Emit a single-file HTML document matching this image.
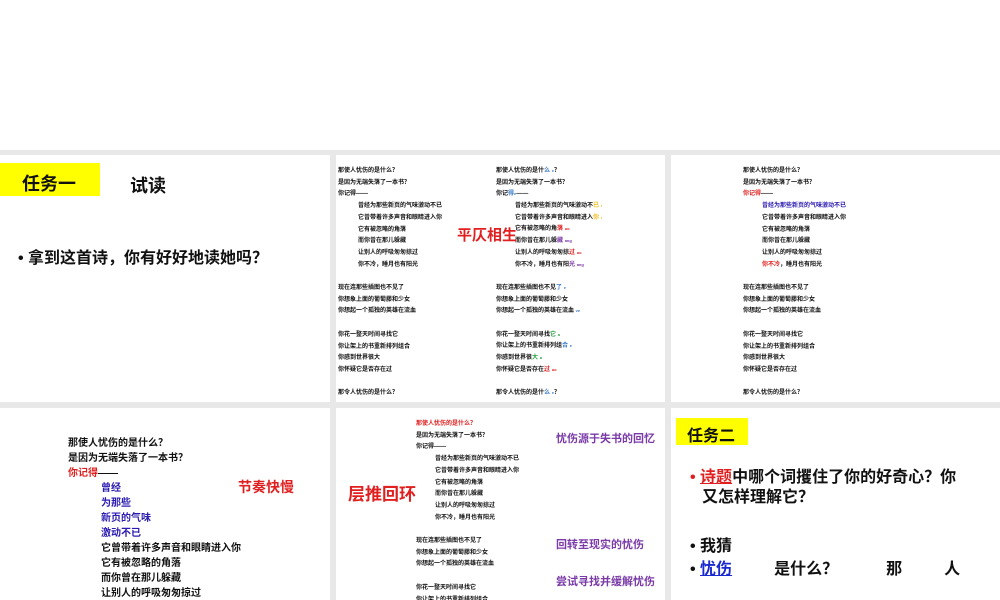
<!DOCTYPE html>
<html><head><meta charset="utf-8"><style>
*{margin:0;padding:0}
body{width:1000px;height:600px;background:#fff;position:relative;overflow:hidden;font-family:"Liberation Sans","Noto Sans CJK SC",sans-serif;font-weight:bold;color:#111}
.g{position:absolute;left:0;top:150px;width:1000px;height:450px;background:#e8e8e8}
.p{position:absolute;background:#fff;overflow:hidden}
.a{position:absolute;white-space:nowrap}
.s{font-size:6px;line-height:11.7px}
.s div{height:11.7px;line-height:11.7px;overflow:visible}
.r{color:#e02020}.b{color:#2a1ab0}.pu{color:#7a35a8}.y{color:#f0c020}.lb{color:#3a7ac8}.gr{color:#2aa040}.pv{color:#7a3aa8}
.ss{font-size:4px;line-height:0;vertical-align:baseline}
</style></head><body>
<div class="g"></div>
<div class="p" style="left:0;top:155px;width:330px;height:247px">
 <div class="a" style="left:0;top:8px;width:100px;height:33px;background:#ffff00"></div>
 <div class="a" style="left:22px;top:15px;font-size:18px">任务一</div>
 <div class="a" style="left:130px;top:17px;font-size:18px">试读</div>
 <div class="a" style="left:18px;top:89px;font-size:16px">• 拿到这首诗，你有好好地读她吗？</div>
</div>
<div class="p" style="left:336px;top:155px;width:329px;height:247px">
 <div class="a s" style="left:2px;top:11px">那使人忧伤的是什么？<br>是因为无端失落了一本书？<br>你记得——<br><span style="padding-left:20px">曾经为那些新页的气味激动不已</span><br><span style="padding-left:20px">它曾带着许多声音和眼睛进入你</span><br><span style="padding-left:20px">它有被忽略的角落</span><br><span style="padding-left:20px">而你曾在那儿躲藏</span><br><span style="padding-left:20px">让别人的呼吸匆匆掠过</span><br><span style="padding-left:20px">你不冷，睡月也有阳光</span><br><br>现在连那些插图也不见了<br>你想象上面的葡萄藤和少女<br>你想起一个孤独的英雄在流血<br><br>你花一整天时间寻找它<br>你让架上的书重新排列组合<br>你感到世界很大<br>你怀疑它是否存在过<br><br>那令人忧伤的是什么？</div>
 <div class="a s" style="left:160px;top:11px">
 <div>那使人忧伤的是什<span class="lb">么</span> <span class="ss lb">e</span>？</div>
 <div>是因为无端失落了一本书？</div>
 <div>你记<span class="lb">得</span><span class="ss lb">e</span>——</div>
 <div style="padding-left:19px">曾经为那些新页的气味激动不<span class="y">已</span> <span class="ss y">i</span></div>
 <div style="padding-left:19px">它曾带着许多声音和眼睛进入<span class="y">你</span> <span class="ss y">i</span></div>
 <div style="padding-left:19px">它有被忽略的角<span class="r">落</span> <span class="ss r">uo</span></div>
 <div style="padding-left:19px">而你曾在那儿躲<span class="pu">藏</span> <span class="ss pu">ang</span></div>
 <div style="padding-left:19px">让别人的呼吸匆匆掠<span class="r">过</span> <span class="ss r">uo</span></div>
 <div style="padding-left:19px">你不冷，睡月也有阳<span class="pu">光</span> <span class="ss pu">ang</span></div>
 <div></div>
 <div>现在连那些插图也不见<span class="lb">了</span> <span class="ss lb">e</span></div>
 <div>你想象上面的葡萄藤和少女</div>
 <div>你想起一个孤独的英雄在流血 <span class="ss lb">ve</span></div>
 <div></div>
 <div>你花一整天时间寻找<span class="gr">它</span> <span class="ss gr">a</span></div>
 <div>你让架上的书重新排列组<span class="lb">合</span> <span class="ss lb">e</span></div>
 <div>你感到世界很<span class="gr">大</span> <span class="ss gr">a</span></div>
 <div>你怀疑它是否存在<span class="r">过</span> <span class="ss r">uo</span></div>
 <div></div>
 <div>那令人忧伤的是什<span class="lb">么</span> <span class="ss lb">e</span>？</div>
 </div>
 <div class="a r" style="left:121px;top:69px;font-size:15px">平仄相生</div>
</div>
<div class="p" style="left:671px;top:155px;width:329px;height:247px">
 <div class="a s" style="left:72px;top:11px">那使人忧伤的是什么？<br>是因为无端失落了一本书？<br><span class="r">你记得</span>——<br><span style="padding-left:19px" class="b">曾经为那些新页的气味激动不已</span><br><span style="padding-left:19px">它曾带着许多声音和眼睛进入你</span><br><span style="padding-left:19px">它有被忽略的角落</span><br><span style="padding-left:19px">而你曾在那儿躲藏</span><br><span style="padding-left:19px">让别人的呼吸匆匆掠过</span><br><span style="padding-left:19px"><span class="r">你不冷</span>，睡月也有阳光</span><br><br>现在连那些插图也不见了<br>你想象上面的葡萄藤和少女<br>你想起一个孤独的英雄在流血<br><br>你花一整天时间寻找它<br>你让架上的书重新排列组合<br>你感到世界很大<br>你怀疑它是否存在过<br><br>那令人忧伤的是什么？</div>
</div>
<div class="p" style="left:0;top:408px;width:330px;height:192px">
 <div class="a" style="left:68px;top:28px;font-size:10px;line-height:15px">那使人忧伤的是什么？<br>是因为无端失落了一本书？<br><span class="r">你记得</span>——<br><span style="padding-left:33px" class="b">曾经</span><br><span style="padding-left:33px" class="b">为那些</span><br><span style="padding-left:33px" class="b">新页的气味</span><br><span style="padding-left:33px" class="b">激动不已</span><br><span style="padding-left:33px">它曾带着许多声音和眼睛进入你</span><br><span style="padding-left:33px">它有被忽略的角落</span><br><span style="padding-left:33px">而你曾在那儿躲藏</span><br><span style="padding-left:33px">让别人的呼吸匆匆掠过</span></div>
 <div class="a r" style="left:238px;top:69px;font-size:14px">节奏快慢</div>
</div>
<div class="p" style="left:336px;top:408px;width:329px;height:192px">
 <div class="a s" style="left:80px;top:11px"><span class="r">那使人忧伤的是什么？</span><br>是因为无端失落了一本书？<br>你记得——<br><span style="padding-left:19px">曾经为那些新页的气味激动不已</span><br><span style="padding-left:19px">它曾带着许多声音和眼睛进入你</span><br><span style="padding-left:19px">它有被忽略的角落</span><br><span style="padding-left:19px">而你曾在那儿躲藏</span><br><span style="padding-left:19px">让别人的呼吸匆匆掠过</span><br><span style="padding-left:19px">你不冷，睡月也有阳光</span><br><br>现在连那些插图也不见了<br>你想象上面的葡萄藤和少女<br>你想起一个孤独的英雄在流血<br><br>你花一整天时间寻找它<br>你让架上的书重新排列组合</div>
 <div class="a r" style="left:12px;top:72px;font-size:17px">层推回环</div>
 <div class="a pv" style="left:220px;top:22px;font-size:11px">忧伤源于失书的回忆</div>
 <div class="a pv" style="left:220px;top:128px;font-size:11px">回转至现实的忧伤</div>
 <div class="a pv" style="left:220px;top:165px;font-size:11px">尝试寻找并缓解忧伤</div>
</div>
<div class="p" style="left:671px;top:408px;width:329px;height:192px">
 <div class="a" style="left:5px;top:10px;width:72px;height:27px;background:#ffff00"></div>
 <div class="a" style="left:16px;top:14px;font-size:16px">任务二</div>
 <div class="a" style="left:19px;top:60px;font-size:16px;line-height:20px"><span class="r">• </span><span class="r" style="text-decoration:underline">诗题</span>中哪个词攫住了你的好奇心？你<br><span style="padding-left:12px">又怎样理解它？</span></div>
 <div class="a" style="left:19px;top:127px;font-size:16px;line-height:23px">• 我猜<br>• <span style="color:#1a2ad0;text-decoration:underline">忧伤</span><span style="padding-left:42px">是什么？</span><span style="padding-left:48px">那</span><span style="padding-left:42px">人</span></div>
</div>
</body></html>
